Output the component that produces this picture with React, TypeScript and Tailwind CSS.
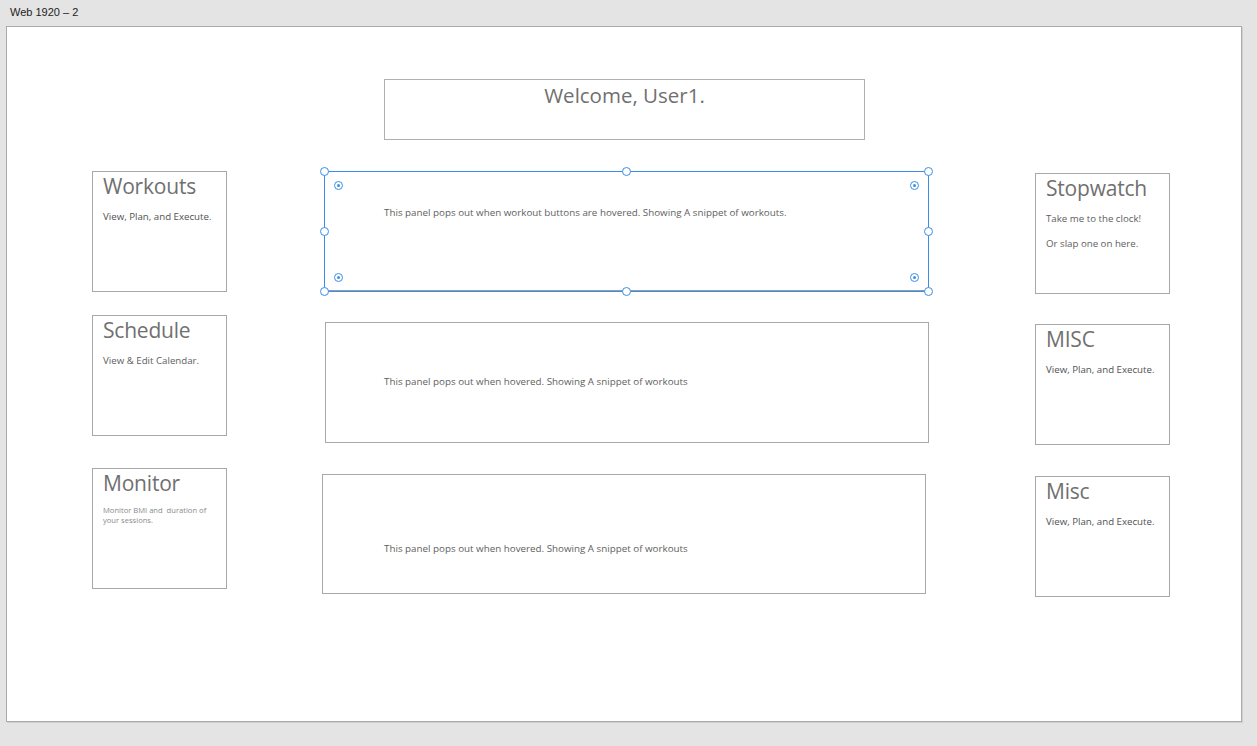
import React from "react";

const font = "font-['Open_Sans','Noto_Sans',sans-serif]";

function Card({ title, children, className = "" }: { title: string; children?: React.ReactNode; className?: string }) {
  return (
    <div className={`w-[135px] h-[121px] border border-[#a8a8a8] bg-white pl-[10px] ${className}`}>
      <div className="text-[21px] leading-[28px] text-[#707070] tracking-[-0.2px]">{title}</div>
      {children}
    </div>
  );
}

function Sub({ children, className = "" }: { children: React.ReactNode; className?: string }) {
  return <div className={`text-[9.7px] leading-[14px] text-[#505050] ${className}`}>{children}</div>;
}

function Handle({ className }: { className: string }) {
  return <div className={`absolute w-[9px] h-[9px] rounded-full bg-white border border-[#3a8ee6] ${className}`} />;
}

function Radius({ className }: { className: string }) {
  return (
    <div className={`absolute w-[9px] h-[9px] rounded-full bg-white border border-[#3a8ee6] flex items-center justify-center ${className}`}>
      <div className="w-[3px] h-[3px] rounded-full bg-[#3a8ee6]" />
    </div>
  );
}

function Panel({
  text,
  className = "",
  textPad,
  selected,
}: {
  text: string;
  className: string;
  textPad: string;
  selected?: boolean;
}) {
  return (
    <div className={`relative bg-white border ${selected ? "border-[#3a8ee6]" : "border-[#a8a8a8]"} ${className}`}>
      <div className={`text-[9.8px] leading-[14px] text-[#606060] ${textPad}`}>{text}</div>
      {selected && (
        <>
          <div className="absolute left-0 right-0 bottom-0 h-px bg-[#9a9a9a]" />
          <Handle className="-left-[5px] -top-[5px]" />
          <Handle className="left-[297px] -top-[5px]" />
          <Handle className="-right-[5px] -top-[5px]" />
          <Handle className="-left-[5px] top-[55px]" />
          <Handle className="-right-[5px] top-[55px]" />
          <Handle className="-left-[5px] -bottom-[5px]" />
          <Handle className="left-[297px] -bottom-[5px]" />
          <Handle className="-right-[5px] -bottom-[5px]" />
          <Radius className="left-[9px] top-[9px]" />
          <Radius className="right-[9px] top-[9px]" />
          <Radius className="left-[9px] bottom-[9px]" />
          <Radius className="right-[9px] bottom-[9px]" />
        </>
      )}
    </div>
  );
}

export default function App() {
  return (
    <div className={`w-[1257px] h-[746px] bg-[#e4e4e4] overflow-hidden ${font}`}>
      <div className="h-[26px] pl-[10px] pt-[4px] text-[11px] leading-[16px] text-[#222] font-['Liberation_Sans',sans-serif]">
        Web 1920 – 2
      </div>
      <div className="ml-[6px] w-[1236px] h-[696px] bg-white border border-[#ababab] shadow-[1px_1px_0_#cfcfcf] flex">
        {/* left buttons */}
        <div className="ml-[85px] mt-[144px] w-[135px] flex flex-col">
          <Card title="Workouts">
            <Sub className="mt-[10px] text-[#444]">View, Plan, and Execute.</Sub>
          </Card>
          <Card title="Schedule" className="mt-[23px]">
            <Sub className="mt-[10px] text-[#606060]">View &amp; Edit Calendar.</Sub>
          </Card>
          <Card title="Monitor" className="mt-[32px]">
            <div className="mt-[8px] w-[110px] text-[7.6px] leading-[10px] text-[#8a8a8a]">
              Monitor BMI and&nbsp; duration of your sessions.
            </div>
          </Card>
        </div>

        {/* center */}
        <div className="ml-[95px] w-[610px] flex flex-col">
          <div className="ml-[62px] mt-[52px] w-[481px] h-[61px] border border-[#b0b0b0] text-center text-[20.5px] leading-[30px] text-[#707070]">
            Welcome, User1.
          </div>
          <Panel
            selected
            className="ml-[2px] mt-[31px] w-[605px] h-[121px]"
            textPad="pl-[59px] pt-[34px]"
            text="This panel pops out when workout buttons are hovered. Showing A snippet of workouts."
          />
          <Panel
            className="ml-[3px] mt-[30px] w-[604px] h-[121px]"
            textPad="pl-[58px] pt-[52px]"
            text="This panel pops out when hovered. Showing A snippet of workouts"
          />
          <Panel
            className="ml-0 mt-[31px] w-[604px] h-[120px]"
            textPad="pl-[61px] pt-[67px]"
            text="This panel pops out when hovered. Showing A snippet of workouts"
          />
        </div>

        {/* right buttons */}
        <div className="ml-[103px] mt-[146px] w-[135px] flex flex-col">
          <Card title="Stopwatch">
            <Sub className="mt-[10px] text-[#606060]">Take me to the clock!</Sub>
            <Sub className="mt-[11px] text-[#606060]">Or slap one on here.</Sub>
          </Card>
          <Card title="MISC" className="mt-[30px]">
            <Sub className="mt-[10px] text-[#444]">View, Plan, and Execute.</Sub>
          </Card>
          <Card title="Misc" className="mt-[31px]">
            <Sub className="mt-[10px] text-[#444]">View, Plan, and Execute.</Sub>
          </Card>
        </div>
      </div>
    </div>
  );
}
